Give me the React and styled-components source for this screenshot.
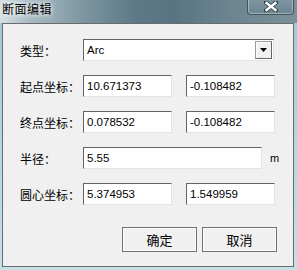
import React from 'react';
import styled, { createGlobalStyle } from 'styled-components';

const GlobalStyle = createGlobalStyle`
  html, body {
    margin: 0;
    padding: 0;
    background: #ffffff;
  }
`;

const Window = styled.div`
  width: 297px;
  height: 270px;
  display: flex;
  flex-direction: column;
  background: linear-gradient(180deg, #9fc6d8 0%, #b4d8e6 60%, #c4e2e6 100%);
  overflow: hidden;
  font-family: "Noto Sans CJK SC", sans-serif;
`;

const TitleBar = styled.div`
  height: 23px;
  flex: none;
  display: flex;
  align-items: flex-start;
  justify-content: space-between;
  background: linear-gradient(90deg, #d6e0e4 0%, #a9bbc3 10%, #7d96a2 28%, #5e7a88 45%, #587482 58%, #6c8591 78%, #7a909a 100%);
`;

const Title = styled.div`
  padding: 1px 0 0 2px;
  font-size: 12px;
  line-height: 16px;
  letter-spacing: 0.5px;
  color: #000;
  text-shadow: 0 0 4px #fff, 0 0 6px rgba(255, 255, 255, 0.9);
`;

const CloseButton = styled.div`
  width: 45px;
  height: 15px;
  margin: -1px 3px 0 0;
  border: 1px solid #3e5561;
  border-top: none;
  border-radius: 0 0 4px 4px;
  box-shadow: inset 0 0 0 1px rgba(255, 255, 255, 0.35);
  background: linear-gradient(180deg, #7f97a2 0%, #6b8590 100%);
  display: flex;
  align-items: center;
  justify-content: center;
`;

const Client = styled.div`
  flex: 1;
  margin: 0 3px 3px 2px;
  border: 1px solid #6b6b6b;
  background: #f0f0f0;
  display: flex;
  flex-direction: column;
  padding: 15px 0 0 17px;
  gap: 14px;
`;

const Row = styled.div`
  height: 22px;
  display: flex;
  align-items: center;
`;

const Label = styled.div`
  width: 63px;
  flex: none;
  font-size: 12px;
  color: #000;
  white-space: nowrap;
`;

const Field = styled.div`
  box-sizing: border-box;
  width: ${p => p.$w}px;
  height: 22px;
  margin-right: ${p => p.$mr || 0}px;
  background: #fff;
  border-top: 1px solid #646464;
  border-left: 1px solid #646464;
  border-right: 1px solid #e3e3e3;
  border-bottom: 1px solid #e3e3e3;
  display: flex;
  align-items: center;
  padding-left: 3px;
  font-family: "Liberation Sans", Arial, sans-serif;
  font-size: 11.5px;
  color: #000;
`;

const ComboText = styled.div`
  flex: 1;
`;

const DropButton = styled.div`
  box-sizing: border-box;
  width: 17px;
  height: 18px;
  margin-right: 1px;
  background: #f0f0f0;
  border: 1px solid #9a9a9a;
  border-right-color: #646464;
  border-bottom-color: #646464;
  box-shadow: inset 1px 1px 0 #fff;
  display: flex;
  align-items: center;
  justify-content: center;
`;

const Unit = styled.div`
  margin-left: 8px;
  font-family: "Liberation Sans", Arial, sans-serif;
  font-size: 11px;
  color: #000;
`;

const ButtonRow = styled.div`
  display: flex;
  gap: 5px;
  margin: 8px 0 0 102px;
`;

const Button = styled.div`
  box-sizing: border-box;
  width: ${p => p.$w}px;
  height: 25px;
  border: 1px solid #707070;
  box-shadow: inset 0 0 0 1px #fcfcfc;
  background: #f0f0f0;
  display: flex;
  align-items: center;
  justify-content: center;
  font-size: 13px;
  color: #000;
`;

const CloseIcon = () => (
  <svg width="14" height="11" viewBox="0 0 14 11">
    <path d="M2 1.5 L12 9.5 M12 1.5 L2 9.5" stroke="#2b3b44" strokeWidth="4" strokeLinecap="square" />
    <path d="M2.5 2 L11.5 9 M11.5 2 L2.5 9" stroke="#ffffff" strokeWidth="2.4" strokeLinecap="square" />
  </svg>
);

const Arrow = () => (
  <svg width="7" height="4" viewBox="0 0 7 4">
    <path d="M0 0 H7 L3.5 4 Z" fill="#000" />
  </svg>
);

export default function App() {
  return (
    <Window>
      <GlobalStyle />
      <TitleBar>
        <Title>断面编辑</Title>
        <CloseButton><CloseIcon /></CloseButton>
      </TitleBar>
      <Client>
        <Row>
          <Label>类型：</Label>
          <Field $w={191}>
            <ComboText>Arc</ComboText>
            <DropButton><Arrow /></DropButton>
          </Field>
        </Row>
        <Row>
          <Label>起点坐标：</Label>
          <Field $w={89} $mr={14}>10.671373</Field>
          <Field $w={89}>-0.108482</Field>
        </Row>
        <Row>
          <Label>终点坐标：</Label>
          <Field $w={89} $mr={14}>0.078532</Field>
          <Field $w={89}>-0.108482</Field>
        </Row>
        <Row>
          <Label>半径：</Label>
          <Field $w={179}>5.55</Field>
          <Unit>m</Unit>
        </Row>
        <Row>
          <Label>圆心坐标：</Label>
          <Field $w={89} $mr={14}>5.374953</Field>
          <Field $w={89}>1.549959</Field>
        </Row>
        <ButtonRow>
          <Button $w={75}>确定</Button>
          <Button $w={75}>取消</Button>
        </ButtonRow>
      </Client>
    </Window>
  );
}
